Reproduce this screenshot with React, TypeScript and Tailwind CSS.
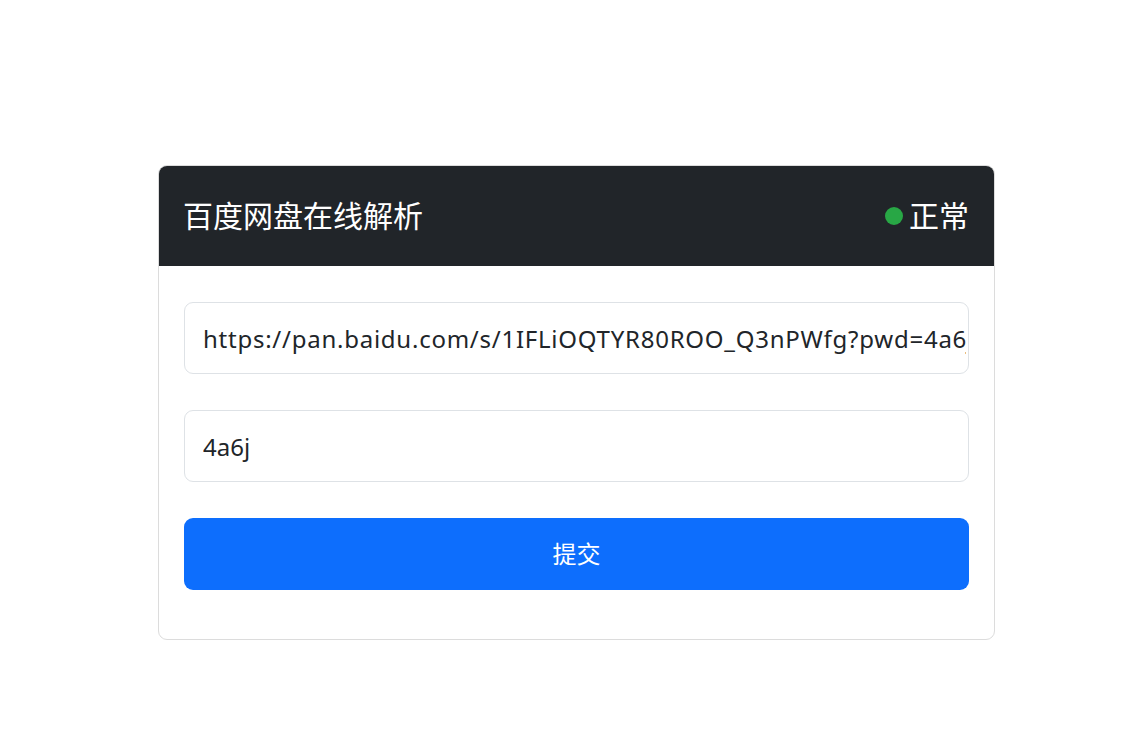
export default function App() {
  const font = {
    fontFamily:
      '"Noto Sans", "Noto Sans CJK SC", sans-serif',
  };
  return (
    <div className="min-h-[748px] bg-white pt-[165px] pl-[158px]" style={font}>
      <div className="w-[837px] rounded-[9px] border border-[#dcdcdc] overflow-hidden">
        <div className="flex h-[100px] items-center justify-between bg-[#212529] pl-[24px] pr-[25px] text-white">
          <h1 className="text-[30px] font-normal leading-none">百度网盘在线解析</h1>
          <div className="flex items-center gap-[6px]">
            <span className="inline-block h-[18px] w-[18px] rounded-full bg-[#28a745]" />
            <span className="text-[30px] leading-none">正常</span>
          </div>
        </div>
        <div className="flex flex-col gap-[36px] px-[25px] pt-[36px] pb-[49px]">
          <input
            readOnly
            value="https://pan.baidu.com/s/1IFLiOQTYR80ROO_Q3nPWfg?pwd=4a6j"
            className="h-[72px] w-full rounded-[9px] border border-[#dee2e6] pl-[18px] pr-[2px] text-[24px] tracking-[0.75px] text-[#212529] outline-none"
            style={font}
          />
          <input
            readOnly
            value="4a6j"
            className="h-[72px] w-full rounded-[9px] border border-[#dee2e6] px-[18px] text-[24px] text-[#212529] outline-none"
            style={font}
          />
          <button
            className="h-[72px] w-full rounded-[9px] bg-[#0d6efd] text-[24px] text-white"
            style={font}
          >
            提交
          </button>
        </div>
      </div>
    </div>
  );
}
